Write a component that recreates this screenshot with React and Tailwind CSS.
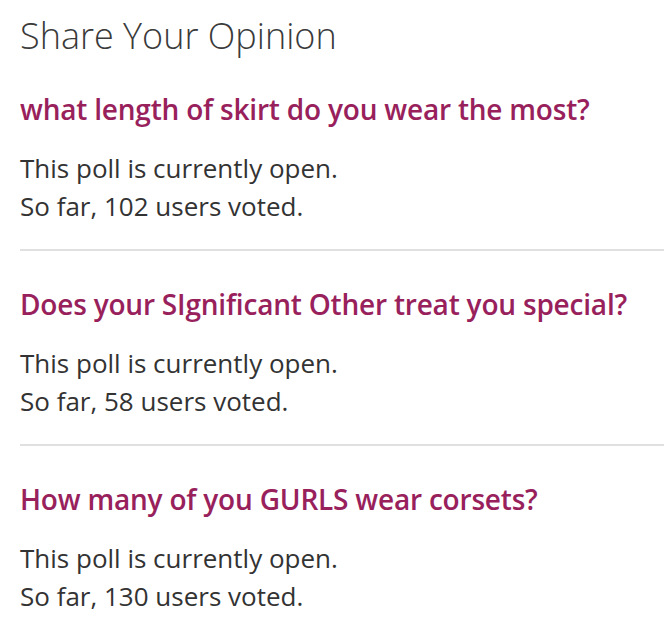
import React from 'react';

const polls = [
    { title: 'what length of skirt do you wear the most?', votes: 102 },
    { title: 'Does your SIgnificant Other treat you special?', votes: 58 },
    { title: 'How many of you GURLS wear corsets?', votes: 130 },
];

const App = () => {
    return (
        <div className="bg-white min-h-screen pl-5 font-['Open_Sans',sans-serif] text-[#333]">
            <h2 className="pt-[12px] pb-[31px] text-[36px] leading-[48px] font-light text-[#3a3a3a]">Share Your Opinion</h2>
            <div className="flex flex-col">
                {polls.map((poll, i) => (
                    <div key={i} className={`${i > 0 ? 'pt-[35px]' : ''} pb-[24px] ${i < polls.length - 1 ? 'border-b-2 border-[#e0e0e0]' : ''}`}>
                        <a href="#" className="block text-[28px] leading-[36px] font-semibold tracking-[-0.2px] text-[#98215c]">
                            {poll.title}
                        </a>
                        <div className="mt-[23px] text-[26px] leading-[37.5px]">
                            <div>This poll is currently open.</div>
                            <div>So far, {poll.votes} users voted.</div>
                        </div>
                    </div>
                ))}
            </div>
        </div>
    );
};

export default App;
